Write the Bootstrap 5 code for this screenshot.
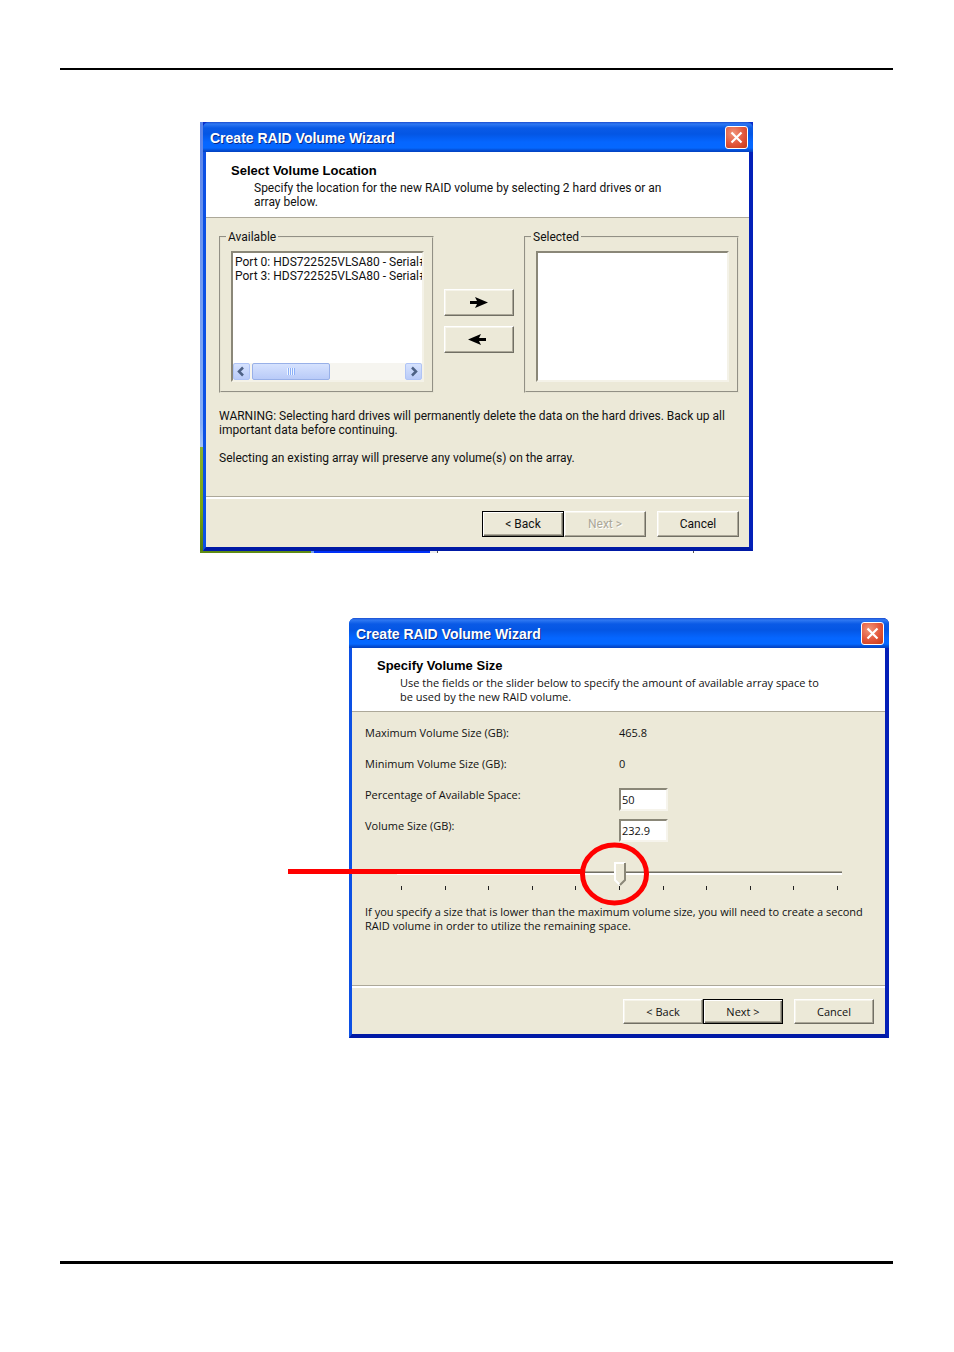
<!DOCTYPE html>
<html lang="en">
<head>
<meta charset="utf-8">
<meta name="viewport" content="width=device-width, initial-scale=1">
<title>Create RAID Volume Wizard</title>
<link href="https://cdn.jsdelivr.net/npm/bootstrap@5.3.0/dist/css/bootstrap.min.css" rel="stylesheet">
<style>
  body { font-family: Roboto, "Liberation Sans", Arial, sans-serif; font-size: 12px; line-height: 14px; color: #111; background: #fff; }
  .sheet { padding: 68px 61px 88px 60px; min-height: 1352px; }
  .rule { height: 2px; background: #000; }
  .rule-end { height: 3px; }
  .figure-a { width: 100%; max-width: 553px; margin-top: 52px; padding: 0 0 2px 3px;
    background:
      linear-gradient(90deg, #5f8c14 0 111px, #6f9cf0 111px 114px, #0030f8 114px 230px, #eee 230px 237px, #555 237px 238px, #fff 238px 493px, #555 493px 494px, #fff 494px) 0 100% / 100% 2px no-repeat,
      linear-gradient(#5a83ea, #86aef8 70%, #a4c2f6 75.4%, #8ab032 75.5%, #7ba50e 90%, #4c7a14) 0 0 / 3px 100% no-repeat #0a2ecb; }
  .figure-b { width: 100%; max-width: 540px; margin-top: 65px; font-family: "Open Sans", "Liberation Sans", Arial, sans-serif; font-size: 11px; }
  .wizard { border: solid; border-width: 0 4px 4px 3px; border-color: #0831d9 #0420b8 #0019a5 #0c50e4; border-radius: 6px 6px 0 0; background: #0c50e4; position: relative; }
  .titlebar { height: 30px; margin: 0 -4px 0 -3px; padding: 1px 5px 0 7px; color: #fff; text-shadow: 1px 1px 0 #0a2a86; border-radius: 6px 6px 0 0;
    background: linear-gradient(#1c4ed0 0, #2f78f2 2px, #0a5ae6 6px, #0456e4 12px, #0566ff 20px, #0568ff 26px, #0450d8 28px, #0240c0 30px); }
  .titlebar h2 { font: bold 14px/24px "Liberation Sans", Arial, sans-serif; }
  .btn-x { width: 23px; height: 23px; padding: 0; border: 1px solid #fff; border-radius: 3px; background: radial-gradient(circle at 35% 30%, #f0957a, #e2553a 55%, #c63a16); line-height: 0; }
  .heading { background: #fff; height: 66px; padding: 12px 24px 0 25px; border-bottom: 1px solid #aca899; }
  .figure-b .heading { height: 64px; padding-top: 11px; }
  .heading h3 { font-family: "Liberation Sans", Arial, sans-serif; font-size: 13px; line-height: 14px; font-weight: 700; margin: 0 0 3px; color: #000; }
  .heading p { margin: 0 0 0 23px; }
  .pane { background: #ece9d8; }
  .pane p { white-space: nowrap; }
  .pane-a { padding: 12px 10px 0 13px; height: 279px; }
  .pane-b { padding: 14px 12px 0 13px; height: 274px; }
  .footer-bar { background: #ece9d8; border-top: 2px solid #fff; box-shadow: 0 -1px 0 #aca899; position: relative; padding: 12px 10px 10px; }
  .figure-b .footer-bar { padding: 11px 11px 10px; }
  .btn-xp { width: 82px; height: 26px; padding: 0; border: 1px solid; border-color: #fff #716f64 #716f64 #fff; background: #ece9d8; color: #111; box-shadow: inset -1px -1px 0 #aca899, inset 1px 1px 0 #f6f4ea; font-size: inherit; line-height: 14px; font-family: inherit; }
  .figure-b .btn-xp { width: 80px; height: 25px; }
  .btn-xp.is-default { border-color: #000; box-shadow: inset 1px 1px 0 #fff, inset -1px -1px 0 #716f64, inset -2px -2px 0 #aca899; }
  .btn-xp:disabled { color: #aca899; text-shadow: 1px 1px 0 #fff; }
  .btn-cancel { margin-left: 11px; }
  .btn-move { width: 70px; height: 27px; line-height: 0; }
  .movers { padding: 18px 10px 0; gap: 10px; }
  .groupbox { flex: 1 1 0; min-width: 0; margin: 0; padding: 0 8px 9px 10px; border: 2px groove #e6e3d2; }
  .groupbox legend { float: none; width: auto; margin: 0 0 0 -5px; padding: 0 2px; font-size: 12px; line-height: 14px; }
  .well { background: #fff; border: 2px solid; border-color: #8a8778 #f4f2e8 #f4f2e8 #8a8778; height: 131px; margin-top: 7px; }
  .well select { display: block; flex: 1 1 auto; width: 100%; min-height: 0; border: 0; outline: 0; padding: 2px 0 0; background: #fff; color: #111; overflow: hidden; font: inherit; line-height: 14px; }
  .well option { padding: 0 0 0 2px; min-height: 14px; line-height: 14px; }
  .hscroll { height: 17px; background: #f6f5f0; }
  .hscroll button { padding: 0; border: 1px solid #b0c4f6; border-radius: 2px; background: linear-gradient(#d6e2fe, #b9cbf8); line-height: 0; }
  .hscroll .arrow { width: 17px; }
  .hscroll .grip { width: 78px; border-color: #98b0e8; margin-left: 2px; }
  .field-row { height: 31px; }
  .field-row .name { width: 254px; max-width: 60%; }
  .edit { width: 49px; height: 23px; padding: 0 1px; border: 2px solid; border-color: #8a8778 #f6f4ec #f6f4ec #8a8778; border-radius: 0; background: #fff; color: #111; font: inherit; }
  .slide { margin: 12px 31px 15px 32px; position: relative; }
  .slide input { display: block; width: 100%; height: 24px; margin: 0; appearance: none; -webkit-appearance: none; background: linear-gradient(#aca899 0 1px, #716f64 1px 2px, #fff 2px 4px) 0 9px / 100% 4px no-repeat; }
  .slide input::-webkit-slider-thumb { -webkit-appearance: none; width: 12px; height: 24px; border: 0; border-radius: 0; box-shadow: none;
    background: url("data:image/svg+xml,%3Csvg xmlns='http://www.w3.org/2000/svg' width='12' height='24'%3E%3Cpath d='M0 0h12v18l-6 6-6-6z' fill='%23ece9d8'/%3E%3Cpath d='M6 23L1 18V1h10' fill='none' stroke='%23fff' stroke-width='2'/%3E%3Cpath d='M11 1v17l-5 5' fill='none' stroke='%238a8778' stroke-width='2'/%3E%3C/svg%3E") no-repeat; }
  .ticks { padding: 0 4px; }
  .ticks span { width: 1px; height: 4px; background: #222; }
  .callout { position: absolute; right: calc(50% - 29px); top: -20px; pointer-events: none; }
</style>
</head>
<body>
<main class="sheet d-flex flex-column">
  <div class="rule"></div>

  <section class="figure-a mx-auto">
    <div class="wizard">
      <header class="titlebar d-flex align-items-center justify-content-between">
        <h2 class="m-0">Create RAID Volume Wizard</h2>
        <button class="btn-x" type="button" aria-label="Close"><svg width="21" height="21" viewBox="0 0 21 21"><path d="M5.500 5.500l10 10M15.500 5.500l-10 10" stroke="#fff" stroke-width="2.200" fill="none"/></svg></button>
      </header>
      <div class="heading">
        <h3>Select Volume Location</h3>
        <p>Specify the location for the new RAID volume by selecting 2 hard drives or an<br>array below.</p>
      </div>
      <div class="pane pane-a">
        <div class="d-flex">
          <fieldset class="groupbox">
            <legend>Available</legend>
            <div class="well d-flex flex-column">
              <select size="7" aria-label="Available">
                <option>Port 0: HDS722525VLSA80 - Serial# VN6</option>
                <option>Port 3: HDS722525VLSA80 - Serial# VN6</option>
              </select>
              <div class="hscroll d-flex">
                <button class="arrow" type="button" aria-label="Scroll left"><svg width="15" height="15" viewBox="0 0 15 15"><path d="M9 3.500L5 7.500l4 4" fill="none" stroke="#4d6185" stroke-width="2.500"/></svg></button>
                <button class="grip" type="button" aria-label="Scroll position"><svg width="10" height="9" viewBox="0 0 10 9"><path d="M1.500 1v7M3.500 1v7M5.500 1v7M7.500 1v7" stroke="#eef4fe"/><path d="M2.500 1v7M4.500 1v7M6.500 1v7M8.500 1v7" stroke="#8cb0f8"/></svg></button>
                <button class="arrow ms-auto" type="button" aria-label="Scroll right"><svg width="15" height="15" viewBox="0 0 15 15"><path d="M6 3.500l4 4-4 4" fill="none" stroke="#4d6185" stroke-width="2.500"/></svg></button>
              </div>
            </div>
          </fieldset>
          <div class="movers d-flex flex-column justify-content-center">
            <button class="btn-xp btn-move" type="button" aria-label="Add drive"><svg width="20" height="13" viewBox="0 0 20 13"><path d="M1 5h7L6 1l13 5.500L6 12l2-4H1z" fill="#000"/></svg></button>
            <button class="btn-xp btn-move" type="button" aria-label="Remove drive"><svg width="24" height="13" viewBox="0 0 24 13"><path d="M19 5h-7l2-4L1 6.500 14 12l-2-4h7z" fill="#000"/></svg></button>
          </div>
          <fieldset class="groupbox">
            <legend>Selected</legend>
            <div class="well d-flex"><select size="8" aria-label="Selected"></select></div>
          </fieldset>
        </div>
        <p class="mt-3 mb-0">WARNING: Selecting hard drives will permanently delete the data on the hard drives. Back up all<br>important data before continuing.<br><br>Selecting an existing array will preserve any volume(s) on the array.</p>
      </div>
      <footer class="footer-bar d-flex justify-content-end">
        <button class="btn-xp is-default" type="button">&lt; Back</button>
        <button class="btn-xp" type="button" disabled>Next &gt;</button>
        <button class="btn-xp btn-cancel" type="button">Cancel</button>
      </footer>
    </div>
  </section>

  <section class="figure-b ms-auto me-1">
    <div class="wizard">
      <header class="titlebar d-flex align-items-center justify-content-between">
        <h2 class="m-0">Create RAID Volume Wizard</h2>
        <button class="btn-x" type="button" aria-label="Close"><svg width="21" height="21" viewBox="0 0 21 21"><path d="M5.500 5.500l10 10M15.500 5.500l-10 10" stroke="#fff" stroke-width="2.200" fill="none"/></svg></button>
      </header>
      <div class="heading">
        <h3>Specify Volume Size</h3>
        <p>Use the fields or the slider below to specify the amount of available array space to<br>be used by the new RAID volume.</p>
      </div>
      <div class="pane pane-b">
        <div class="field-row d-flex align-items-start"><span class="name">Maximum Volume Size (GB):</span><span>465.8</span></div>
        <div class="field-row d-flex align-items-start"><span class="name">Minimum Volume Size (GB):</span><span>0</span></div>
        <div class="field-row d-flex align-items-start"><label class="name" for="pct">Percentage of Available Space:</label><input class="edit" id="pct" type="text" value="50"></div>
        <div class="field-row d-flex align-items-start"><label class="name" for="size">Volume Size (GB):</label><input class="edit" id="size" type="text" value="232.9"></div>
        <div class="slide">
          <input type="range" min="0" max="100" value="50" aria-label="Percentage of available space">
          <div class="ticks d-flex justify-content-between"><span></span><span></span><span></span><span></span><span></span><span></span><span></span><span></span><span></span><span></span><span></span></div>
          <svg class="callout" width="361" height="64" viewBox="0 0 361 64"><path d="M0 29.500h294" stroke="#f00" stroke-width="5"/><ellipse cx="326.500" cy="32" rx="32" ry="29" fill="none" stroke="#f00" stroke-width="5"/></svg>
        </div>
        <p class="mb-0">If you specify a size that is lower than the maximum volume size, you will need to create a second<br>RAID volume in order to utilize the remaining space.</p>
      </div>
      <footer class="footer-bar d-flex justify-content-end">
        <button class="btn-xp" type="button">&lt; Back</button>
        <button class="btn-xp is-default" type="button">Next &gt;</button>
        <button class="btn-xp btn-cancel" type="button">Cancel</button>
      </footer>
    </div>
  </section>

  <div class="rule rule-end mt-auto"></div>
</main>
<script src="https://cdn.jsdelivr.net/npm/bootstrap@5.3.0/dist/js/bootstrap.bundle.min.js"></script>
</body>
</html>
